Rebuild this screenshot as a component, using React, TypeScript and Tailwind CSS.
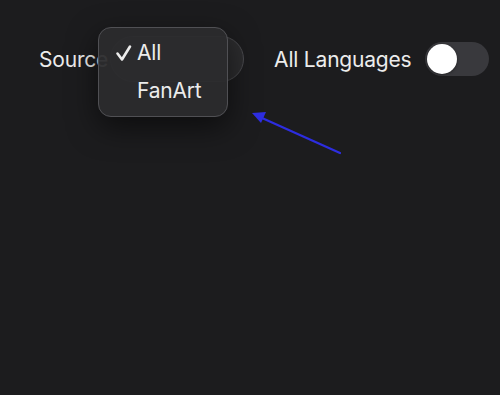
import React from 'react';

const font = { fontFamily: 'Inter, "Liberation Sans", sans-serif' };

const Toggle = ({ on = false }: { on?: boolean }) => (
  <div className={`w-[64px] h-[34px] rounded-full p-[2px] flex items-center ${on ? 'bg-[#30d158] justify-end' : 'bg-[#39393d] justify-start'}`}>
    <div className="w-[30px] h-[30px] rounded-full bg-white shadow-[0_1px_3px_rgba(0,0,0,0.4)]" />
  </div>
);

const Check = () => (
  <svg width="18" height="18" viewBox="0 0 18 18" fill="none">
    <path d="M2.5 9.5 L7 15.5 L15 2.5" stroke="#ececec" strokeWidth="2.6" strokeLinecap="round" strokeLinejoin="round" />
  </svg>
);

export default function App() {
  return (
    <div className="relative w-[500px] h-[395px] bg-[#1c1c1e] overflow-hidden text-[#ececec]" style={font}>
      <div className="flex items-center pt-[36px] pl-[39px]">
        <span className="text-[21px] tracking-[-0.2px] pt-[2px]">Source</span>
        <div className="ml-[2px] w-[134px] h-[46px] rounded-full bg-[#2c2c2e] border border-[#4a4a4e]" />
        <span className="ml-[30px] text-[21px] tracking-[-0.2px] pt-[2px]">All Languages</span>
        <div className="ml-[14px]">
          <Toggle />
        </div>
      </div>

      {/* source menu */}
      <div className="absolute left-[98px] top-[27px] w-[130px] h-[90px] rounded-[13px] bg-[#2b2b2d]/95 border border-[#505054] shadow-[0_10px_30px_rgba(0,0,0,0.55)] flex flex-col justify-center py-[6px] text-[21px] tracking-[-0.2px]">
        <div className="flex items-center h-[38px]">
          <span className="w-[38px] flex justify-end pr-[4px]">
            <Check />
          </span>
          <span>All</span>
        </div>
        <div className="flex items-center h-[38px]">
          <span className="w-[38px]" />
          <span>FanArt</span>
        </div>
      </div>

      {/* annotation arrow */}
      <svg className="absolute left-0 top-0" width="500" height="395" viewBox="0 0 500 395">
        <line x1="340" y1="153" x2="262" y2="118" stroke="#2d2de0" strokeWidth="2.2" strokeLinecap="round" />
        <polygon points="252,113 266,112 261,123" fill="#2d2de0" />
      </svg>
    </div>
  );
}
